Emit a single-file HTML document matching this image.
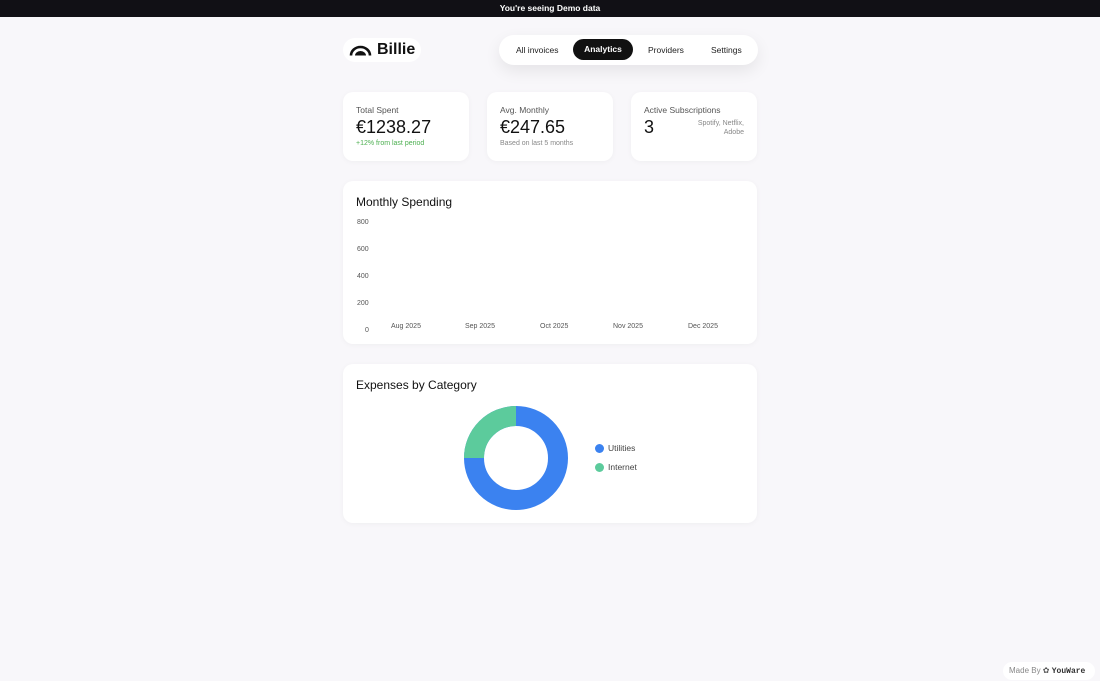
<!DOCTYPE html>
<html><head><style>
*{margin:0;padding:0;box-sizing:border-box}
body{width:1100px;height:681px;background:#f8f7fa;font-family:"Liberation Sans",sans-serif;position:relative;overflow:hidden;color:#111}
.top{position:absolute;left:0;top:0;width:1100px;height:17px;background:#111015;color:#fff;font-size:8.5px;font-weight:bold;text-align:center;line-height:16px}
.abs{position:absolute}
.card{position:absolute;background:#fff;border-radius:10px;box-shadow:0 1px 6px rgba(0,0,0,0.04)}
.lbl{font-size:8.5px;color:#555}
.big{font-size:18px;color:#111;font-weight:500}
.small{font-size:7px;color:#888}
.nav{position:absolute;left:499px;top:35px;width:259px;height:30px;background:#fff;border-radius:15px;box-shadow:0 6px 16px rgba(0,0,0,0.08)}
.nav span{position:absolute;top:0;line-height:30px;font-size:8.5px;color:#222}
.ax{position:absolute;font-size:7px;color:#555}
</style></head><body>
<div class="top">You're seeing Demo data</div>
<div class="abs" style="left:343px;top:38px;width:78px;height:24px;background:#fff;border-radius:12px"></div>
<svg class="abs" style="left:349px;top:45px" width="23" height="11" viewBox="0 0 23 11"><path d="M2 10.5 A9.5 8.5 0 0 1 21 10.5" fill="none" stroke="#111" stroke-width="2.6"/><path d="M6 10.5 A5.5 4.5 0 0 1 17 10.5 Z" fill="#111"/></svg>
<div class="abs" style="left:377px;top:41px;font-size:16px;font-weight:bold">Billie</div>
<div class="nav">
<span style="left:17px">All invoices</span>
<span style="left:74px;top:4px;width:60px;height:21px;line-height:21px;background:#111;color:#fff;border-radius:11px;text-align:center;font-weight:bold">Analytics</span>
<span style="left:149px">Providers</span>
<span style="left:212px">Settings</span>
</div>
<div class="card" style="left:343px;top:92px;width:126px;height:69px">
<div class="lbl abs" style="left:13px;top:13px">Total Spent</div>
<div class="big abs" style="left:13px;top:25px">€1238.27</div>
<div class="small abs" style="left:13px;top:48px;color:#4caf50">+12% from last period</div></div>
<div class="card" style="left:487px;top:92px;width:126px;height:69px">
<div class="lbl abs" style="left:13px;top:13px">Avg. Monthly</div>
<div class="big abs" style="left:13px;top:25px">€247.65</div>
<div class="small abs" style="left:13px;top:48px">Based on last 5 months</div></div>
<div class="card" style="left:631px;top:92px;width:126px;height:69px">
<div class="lbl abs" style="left:13px;top:13px">Active Subscriptions</div>
<div class="big abs" style="left:13px;top:25px">3</div>
<div class="small abs" style="right:13px;top:27px;text-align:right;line-height:9px">Spotify, Netflix,<br>Adobe</div></div>
<div class="card" style="left:343px;top:181px;width:414px;height:163px">
<div class="abs" style="left:13px;top:14px;font-size:12px">Monthly Spending</div>
<div class="ax" style="left:14px;top:38px">800</div>
<div class="ax" style="left:14px;top:65px">600</div>
<div class="ax" style="left:14px;top:92px">400</div>
<div class="ax" style="left:14px;top:119px">200</div>
<div class="ax" style="left:22px;top:146px">0</div>
<div class="ax" style="left:48px;top:142px">Aug 2025</div>
<div class="ax" style="left:122px;top:142px">Sep 2025</div>
<div class="ax" style="left:197px;top:142px">Oct 2025</div>
<div class="ax" style="left:270px;top:142px">Nov 2025</div>
<div class="ax" style="left:345px;top:142px">Dec 2025</div>
</div>
<div class="card" style="left:343px;top:364px;width:414px;height:159px">
<div class="abs" style="left:13px;top:14px;font-size:12px">Expenses by Category</div>
<svg class="abs" style="left:121px;top:42px" width="104" height="104" viewBox="0 0 104 104">
<circle cx="52" cy="52" r="42" fill="none" stroke="#3b82f0" stroke-width="20"/>
<path d="M52 10 A42 42 0 0 0 10 52" fill="none" stroke="#5ccb9c" stroke-width="20"/>
</svg>
<div class="abs" style="left:252px;top:80px;width:9px;height:9px;border-radius:50%;background:#3b82f0"></div>
<div class="abs" style="left:265px;top:79px;font-size:8.5px;color:#444">Utilities</div>
<div class="abs" style="left:252px;top:99px;width:9px;height:9px;border-radius:50%;background:#5ccb9c"></div>
<div class="abs" style="left:265px;top:98px;font-size:8.5px;color:#444">Internet</div>
</div>
<div class="abs" style="left:1003px;top:662px;width:92px;height:18px;background:#fff;border-radius:9px;font-size:8px;color:#888;line-height:18px;padding-left:6px">Made By <span style="color:#555">✿</span> <b style="color:#333;font-family:'Liberation Mono',monospace">YouWare</b></div>
</body></html>
